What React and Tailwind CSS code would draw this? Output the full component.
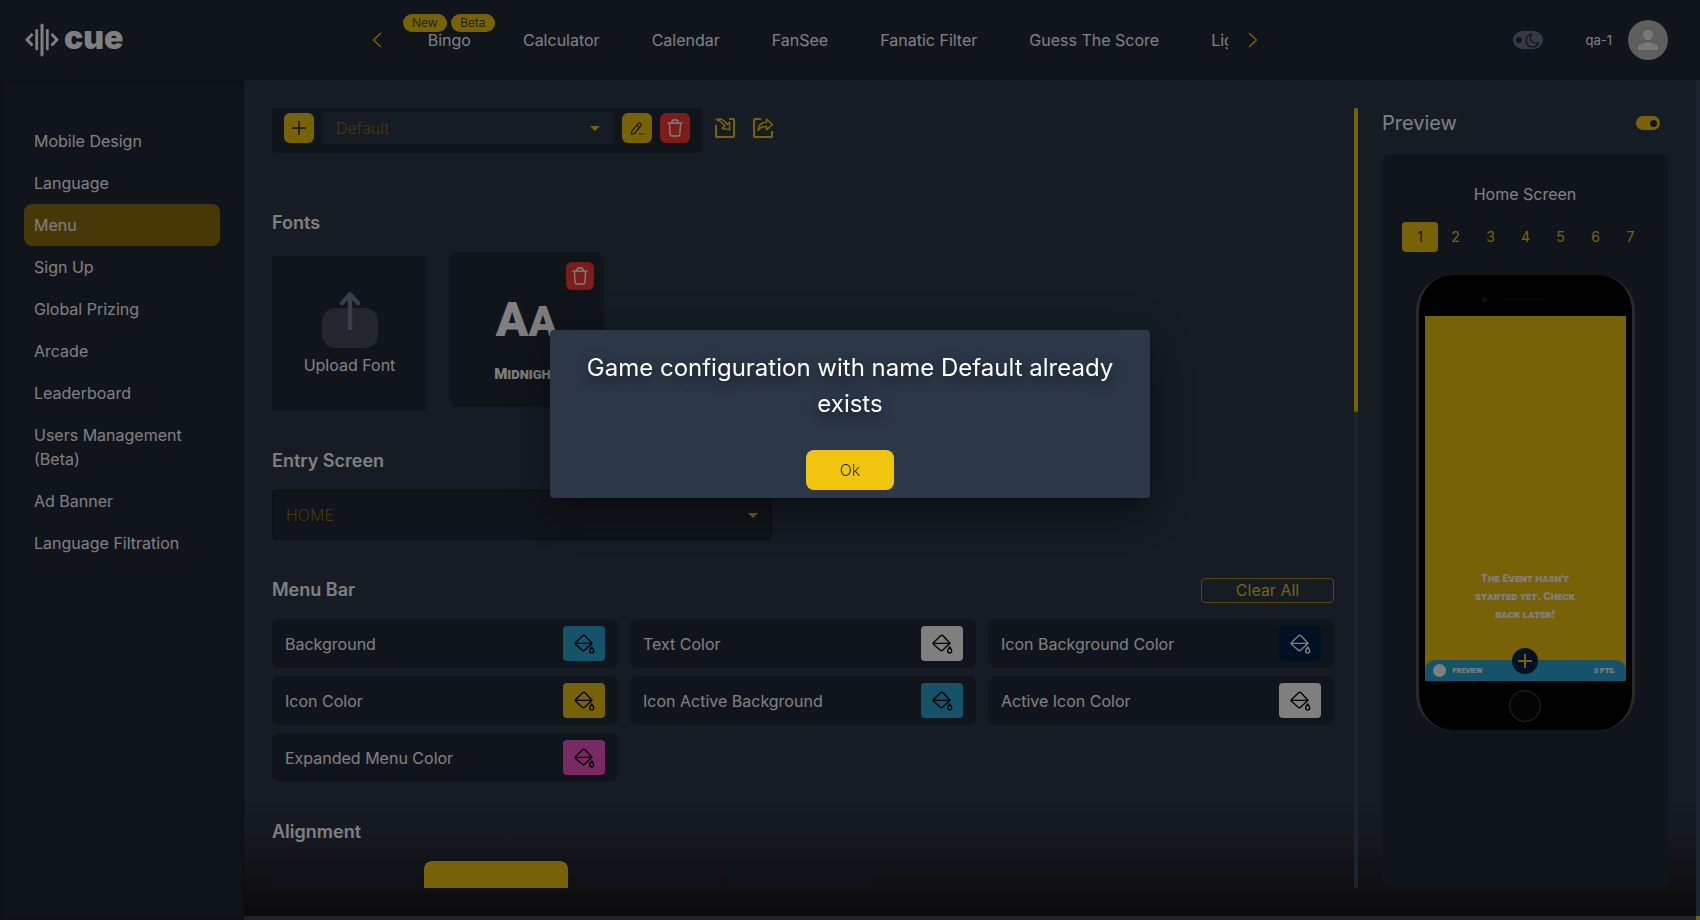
import React, { useState } from 'react';

const NAV_ITEMS = ['Bingo', 'Calculator', 'Calendar', 'FanSee', 'Fanatic Filter', 'Guess The Score', 'Lightshow'];

const SIDE_ITEMS = [
  'Mobile Design',
  'Language',
  'Menu',
  'Sign Up',
  'Global Prizing',
  'Arcade',
  'Leaderboard',
  'Users Management (Beta)',
  'Ad Banner',
  'Language Filtration',
];

const COLORS = [
  { label: 'Background', swatch: 'bg-[#2ba6d6] text-black' },
  { label: 'Text Color', swatch: 'bg-white text-black' },
  { label: 'Icon Background Color', swatch: 'bg-[#002348] text-white' },
  { label: 'Icon Color', swatch: 'bg-[#f1c40f] text-black' },
  { label: 'Icon Active Background', swatch: 'bg-[#2ba6d6] text-black' },
  { label: 'Active Icon Color', swatch: 'bg-white text-black' },
  { label: 'Expanded Menu Color', swatch: 'bg-[#ee57c4] text-black' },
];

function Logo() {
  return (
    <a href="#home" aria-label="cue" className="flex w-[98px] items-center gap-1 text-white">
      <svg className="shrink-0" width="36" height="34" viewBox="-1 0 36 34" fill="none" stroke="currentColor" aria-hidden="true">
        <g strokeWidth="3" strokeLinecap="round">
          <path d="M17 2v30" />
          <path d="M11.700 7.500v18.500" strokeWidth="2.800" />
          <path d="M22.300 7.500v18.500" strokeWidth="2.800" />
        </g>
        <path d="M7.500 11L2 16.700l5.500 5.800M26.500 11l5.500 5.700-5.500 5.800" strokeWidth="2.800" />
      </svg>
      <span className="pb-1 text-[32px] leading-[34px] font-black">cue</span>
    </a>
  );
}

function Chevron({ right }) {
  return (
    <svg width="10" height="16" viewBox="0 0 10 16" fill="none" stroke="currentColor" strokeWidth="1.400" aria-hidden="true">
      <path d={right ? 'M1 1l7.500 7L1 15' : 'M9 1L1.500 8 9 15'} />
    </svg>
  );
}

function Caret() {
  return (
    <svg className="pointer-events-none absolute right-[14px] h-[5px] w-[10px] text-[#f1c40f]" viewBox="0 0 10 5" aria-hidden="true">
      <path d="M0 0h10L5 5z" fill="currentColor" />
    </svg>
  );
}

function TrashIcon() {
  return (
    <svg width="16" height="18" viewBox="0 0 16 18" fill="none" stroke="currentColor" strokeWidth="1.400" strokeLinecap="round" strokeLinejoin="round" aria-hidden="true">
      <path d="M1 4h14M5 4V2.500Q5 1 6.500 1h3Q11 1 11 2.500V4M2.500 5.500l.6 9.600Q3.200 17 5 17h6q1.800 0 1.900-1.900l.6-9.600" />
    </svg>
  );
}

function PencilIcon() {
  return (
    <svg width="15" height="15" viewBox="0 0 16 16" fill="none" stroke="currentColor" strokeWidth="1.200" strokeLinejoin="round" strokeLinecap="round" aria-hidden="true">
      <path d="M2 10.500L8.600 2.700q1.200-1.300 2.600-.2 1.500 1.200.4 2.700L5.200 13l-3 1.200q-.7.200-.6-.6zM7.400 4.200q.7 2.100 2.900 2.600" />
      <path d="M10 14h5" opacity=".5" />
    </svg>
  );
}

function ImportIcon() {
  return (
    <svg width="22" height="22" viewBox="0 0 22 22" fill="none" stroke="currentColor" strokeWidth="2" strokeLinejoin="round" aria-hidden="true">
      <path d="M2 8v11.500q0 .5.500.5h17q.5 0 .500-.5v-17q0-.5-.500-.5H15" />
      <path d="M2 2.500Q9 .5 13 7.500l2.500-2.200.2 7.500-7.600-1.300 2.400-2.100Q8 4 2 2.500z" strokeWidth="1.600" />
    </svg>
  );
}

function ExportIcon() {
  return (
    <svg width="22" height="22" viewBox="0 0 22 22" fill="none" stroke="currentColor" strokeWidth="2" strokeLinejoin="round" aria-hidden="true">
      <path d="M9 2H2.500Q2 2 2 2.500v17q0 .5.500.5h17q.5 0 .500-.5V14" />
      <path d="M6 13.500q.5-8 8.500-8.200V2.200L20.500 7.500 14.500 12.800V9.500Q9 9 6 13.500z" strokeWidth="1.600" />
    </svg>
  );
}

function BucketIcon() {
  return (
    <svg width="21" height="20" viewBox="0 0 21 20" fill="none" stroke="currentColor" strokeWidth="1.400" strokeLinejoin="round" strokeLinecap="round" aria-hidden="true">
      <path d="M8.600 1.800Q9.800.7 11 1.800L18 9.200 10.600 16.200Q9.500 17.200 8.400 16.200L1.700 10.500Q.6 9.500 1.600 8.400zM1.200 9.400h16.500" />
      <path d="M17.700 13q2 2.600 2 3.900a2 2 0 0 1-4 0q0-1.300 2-3.900z" />
    </svg>
  );
}

function Header() {
  return (
    <header className="flex h-20 shrink-0 items-center bg-[#202836] pr-8 pl-6">
      <Logo />
      <div className="ml-auto flex items-center gap-5 pr-[6px]">
        <button type="button" aria-label="Previous" className="text-[#f1c40f]">
          <Chevron />
        </button>
        <nav className="flex h-20 w-[826px] items-center overflow-hidden">
          {NAV_ITEMS.map((item, i) => (
            <a key={item} href="#game" className="relative flex h-14 shrink-0 items-center px-[26px]">
              {i === 0 && (
                <span className="absolute top-[2px] left-px flex gap-1 text-xs leading-[18px] font-light text-[#202836]">
                  <span className="w-11 rounded-full bg-[#f1c40f] text-center">New</span>
                  <span className="w-11 rounded-full bg-[#f1c40f] text-center">Beta</span>
                </span>
              )}
              {item}
            </a>
          ))}
        </nav>
        <button type="button" aria-label="Next" className="text-[#f1c40f]">
          <Chevron right />
        </button>
      </div>
      <div className="ml-auto flex items-center">
        <label className="mr-[42px] flex h-[18px] w-[30px] items-center justify-between rounded-full bg-[#6c7284] px-[3px]">
          <input type="checkbox" aria-label="Dark theme" defaultChecked className="sr-only" />
          <span className="h-[6px] w-[6px] rounded-full bg-[#202836]" />
          <svg width="15" height="15" viewBox="0 0 15 15" fill="none" stroke="#202836" strokeWidth="1.300" strokeLinejoin="round" aria-hidden="true">
            <path d="M6.500 1Q1 2.600 1 7.600 1.400 13.800 7.600 14q4.500 0 6.200-4.200-5 1.600-7.500-1.700Q4.200 4.800 6.500 1z" />
          </svg>
        </label>
        <span className="mr-4 text-[13px]">qa-1</span>
        <span className="flex h-10 w-10 items-center justify-center overflow-hidden rounded-full bg-[#bdbdbd]">
          <svg width="30" height="30" viewBox="0 0 24 24" fill="#f2f2f2" aria-hidden="true">
            <path d="M12 12c2.200 0 4-1.800 4-4s-1.800-4-4-4-4 1.800-4 4 1.800 4 4 4zm0 2c-2.700 0-8 1.300-8 4v2h16v-2c0-2.700-5.300-4-8-4z" />
          </svg>
        </span>
      </div>
    </header>
  );
}

function Sidebar() {
  return (
    <aside className="w-[244px] shrink-0 bg-[#202836] px-6 pt-10 shadow-[inset_0_0_6px_rgba(0,0,0,0.35)]">
      <nav className="flex flex-col">
        {SIDE_ITEMS.map((item) => (
          <a
            key={item}
            href="#section"
            className={item === 'Menu' ? 'rounded-lg bg-[#8e730e] px-[10px] py-[9px]' : 'px-[10px] py-[9px]'}
          >
            {item}
          </a>
        ))}
      </nav>
    </aside>
  );
}

function Heading({ children }) {
  return <h2 className="text-lg leading-7 font-semibold text-white">{children}</h2>;
}

function Toolbar() {
  return (
    <div className="flex items-start gap-3">
      <div className="flex h-[45px] items-start rounded-b-sm bg-[#202a36] px-3 pt-1">
        <div className="flex h-8 items-center gap-2">
          <button type="button" aria-label="Add configuration" className="flex h-[30px] w-[30px] items-center justify-center rounded-md bg-[#f1c40f] text-[#202836]">
            <svg width="14" height="14" viewBox="0 0 14 14" stroke="currentColor" strokeWidth="1.500" aria-hidden="true">
              <path d="M7 0v14M0 7h14" />
            </svg>
          </button>
          <div className="relative flex w-[292px] items-center">
            <select aria-label="Configuration" className="h-8 w-full appearance-none rounded-sm bg-[#2a3848] px-[14px] text-base font-light text-[#8c6c14]">
              <option>Default</option>
            </select>
            <Caret />
          </div>
          <button type="button" aria-label="Rename" className="flex h-[30px] w-[30px] items-center justify-center rounded-md bg-[#f1c40f] text-[#202836]">
            <PencilIcon />
          </button>
          <button type="button" aria-label="Delete configuration" className="flex h-[30px] w-[30px] items-center justify-center rounded-md bg-[#fb3a34] text-white">
            <TrashIcon />
          </button>
        </div>
      </div>
      <div className="flex h-10 items-center gap-4 text-[#f1c40f]">
        <button type="button" aria-label="Import">
          <ImportIcon />
        </button>
        <button type="button" aria-label="Export">
          <ExportIcon />
        </button>
      </div>
    </div>
  );
}

function Fonts() {
  return (
    <section className="mt-14">
      <Heading>Fonts</Heading>
      <div className="mt-[15px] flex gap-[22px]">
        <button type="button" className="mt-1 flex h-[155px] w-[155px] flex-col items-center rounded-sm bg-[#202a36] pt-9">
          <svg width="56" height="56" viewBox="0 0 56 56" fill="none" aria-hidden="true">
            <rect y="16" width="56" height="40" rx="13" fill="#464c5a" />
            <path d="M28 36V3M20 11l8-8.500 8 8.500" stroke="#767c8c" strokeWidth="4.500" strokeLinecap="round" strokeLinejoin="round" />
          </svg>
          <span className="mt-[5px]">Upload Font</span>
        </button>
        <div className="relative flex h-[155px] w-[155px] flex-col items-center rounded-lg bg-[#202a36] pt-9 font-[Roboto,sans-serif] font-black">
          <button type="button" aria-label="Delete font" className="absolute top-[10px] right-[10px] flex h-7 w-7 items-center justify-center rounded-md bg-[#fb3a34] text-white">
            <TrashIcon />
          </button>
          <span className="text-[48px] leading-[64px]">
            A<span className="text-[42px]">A</span>
          </span>
          <span className="mt-2 text-[15px] leading-6 uppercase">
            M<span className="text-[13px]">idnight</span>
          </span>
        </div>
      </div>
    </section>
  );
}

function EntryScreen() {
  return (
    <section className="mt-9">
      <Heading>Entry Screen</Heading>
      <div className="relative mt-[15px] flex w-[500px] items-center">
        <select aria-label="Entry screen" className="h-[50px] w-full appearance-none rounded-sm border border-[#171c25] bg-[#202a36] px-[13px] text-base font-light text-[#8c6c14]">
          <option>HOME</option>
        </select>
        <Caret />
      </div>
    </section>
  );
}

function MenuBar() {
  return (
    <section className="mt-9">
      <div className="flex items-center justify-between">
        <Heading>Menu Bar</Heading>
        <button type="button" className="flex h-[25px] w-[133px] items-center justify-center rounded-sm border border-[#b0900f] text-[#f1c40f]">
          Clear All
        </button>
      </div>
      <div className="mt-[15px] grid grid-cols-3 gap-x-3 gap-y-2">
        {COLORS.map((c) => (
          <div key={c.label} className="flex h-[49px] items-center justify-between rounded-lg bg-[#202a36] px-[13px]">
            <span>{c.label}</span>
            <button type="button" aria-label={c.label} className={`flex h-[35px] w-[42px] items-center justify-center rounded-sm ${c.swatch}`}>
              <BucketIcon />
            </button>
          </div>
        ))}
      </div>
    </section>
  );
}

function Alignment() {
  const [active, setActive] = useState(1);
  return (
    <section className="mt-9">
      <Heading>Alignment</Heading>
      <div className="mt-[15px] flex gap-2">
        {['Left', 'Center', 'Right', 'Justified'].map((name, i) => (
          <button
            key={name}
            type="button"
            aria-label={name}
            onClick={() => setActive(i)}
            className={i === active ? 'h-36 w-36 rounded-lg bg-[#f1c40f]' : 'h-36 w-36 rounded-lg bg-[#212834]'}
          />
        ))}
      </div>
    </section>
  );
}

function Phone() {
  return (
    <div className="mx-auto mt-[23px] w-[219px] rounded-[36px] border-x-[3px] border-[#555] bg-black px-[6px] font-[Roboto,sans-serif] font-black">
      <div className="flex h-[41px] items-center justify-center gap-4 pt-2 pr-6">
        <span className="h-[5px] w-[5px] rounded-full bg-[#20202c]" />
        <span className="h-[3px] w-[42px] rounded-full bg-[#0e0e0e]" />
      </div>
      <div className="flex h-[365px] flex-col bg-[#f1c40f]">
        <p className="mt-auto pb-9 text-center text-[11px] leading-[18px] [font-variant:small-caps]">
          The Event hasn't
          <br />
          started yet. Check
          <br />
          back later!
        </p>
        <div className="relative flex h-[21px] items-center rounded-t-[10px] bg-[#2ba6d6] px-2 text-[7px] uppercase">
          <span className="h-[13px] w-[13px] rounded-full bg-white" />
          <span className="ml-[7px]">Preview</span>
          <span className="mr-[2px] ml-auto">0 pts.</span>
          <button type="button" aria-label="Open menu" className="absolute inset-x-0 -top-3 mx-auto flex h-[26px] w-[26px] items-center justify-center rounded-full bg-[#002348] text-[#f1c40f]">
            <svg width="14" height="14" viewBox="0 0 14 14" stroke="currentColor" strokeWidth="2" aria-hidden="true">
              <path d="M7 0v14M0 7h14" />
            </svg>
          </button>
        </div>
      </div>
      <div className="flex h-[49px] items-center justify-center">
        <span className="h-8 w-8 rounded-full border border-[#4a4a4a] bg-[#0a0a0a]" />
      </div>
    </div>
  );
}

function Preview() {
  return (
    <aside className="ml-6 flex w-[286px] shrink-0 flex-col">
      <div className="flex h-[30px] items-center justify-between pr-2">
        <h2 className="text-xl">Preview</h2>
        <label className="flex h-[14px] w-6 items-center justify-end rounded-full bg-[#f1c40f] px-[3px]">
          <input type="checkbox" aria-label="Show preview" defaultChecked className="sr-only" />
          <span className="h-[7px] w-[7px] rounded-full bg-[#202836]" />
        </label>
      </div>
      <div className="mt-4 flex flex-1 flex-col rounded-lg bg-[#202a36] pt-7">
        <h3 className="text-center">Home Screen</h3>
        <div className="mt-4 flex justify-center text-sm text-[#f1c40f]">
          {[1, 2, 3, 4, 5, 6, 7].map((n) => (
            <button
              key={n}
              type="button"
              className={n === 1 ? 'h-[30px] w-9 rounded-sm bg-[#f1c40f] text-[#202836]' : 'h-[30px] w-[35px]'}
            >
              {n}
            </button>
          ))}
        </div>
        <Phone />
      </div>
    </aside>
  );
}

function Dialog() {
  return (
    <div className="fixed inset-0 flex items-center justify-center bg-black/50 pb-[92px]">
      <div
        role="alertdialog"
        aria-labelledby="dialog-title"
        className="flex w-[600px] flex-col items-center rounded-sm bg-[#2c3748] px-6 pt-5 pb-2 shadow-[0_11px_15px_-7px_rgba(0,0,0,0.2),0_24px_38px_3px_rgba(0,0,0,0.14),0_9px_46px_8px_rgba(0,0,0,0.22)]"
      >
        <h1 id="dialog-title" className="text-center text-2xl leading-9 [text-shadow:0_4px_12px_rgba(0,0,0,0.6)]">
          Game configuration with name Default already exists
        </h1>
        <button type="button" className="mt-7 h-10 w-[88px] rounded-lg bg-[#f1c40f] font-light text-[#1f2937]">
          Ok
        </button>
      </div>
    </div>
  );
}

export default function App() {
  return (
    <div className="flex h-screen flex-col overflow-hidden bg-[#202836] font-[Inter,sans-serif] text-base leading-6 text-white">
      <Header />
      <div className="flex min-h-0 flex-1">
        <Sidebar />
        <main className="relative flex min-w-0 flex-1 border-r-4 border-b-4 border-[#3a465f] bg-[#2a3848] bg-[linear-gradient(to_top,#151517_0,#222327_40px,#262a34_60px,#2b3241_85px,transparent_115px)] p-7">
          <div className="min-w-0 flex-1 overflow-hidden pr-5">
            <Toolbar />
            <Fonts />
            <EntryScreen />
            <MenuBar />
            <Alignment />
          </div>
          <div className="w-1 shrink-0 bg-[#3a465f]">
            <div className="h-[39%] rounded-full bg-[#f1c40f]" />
          </div>
          <Preview />
          <span className="absolute -right-1 -bottom-1 h-1 w-1 bg-[#f1c40f]" />
        </main>
      </div>
      <Dialog />
    </div>
  );
}
